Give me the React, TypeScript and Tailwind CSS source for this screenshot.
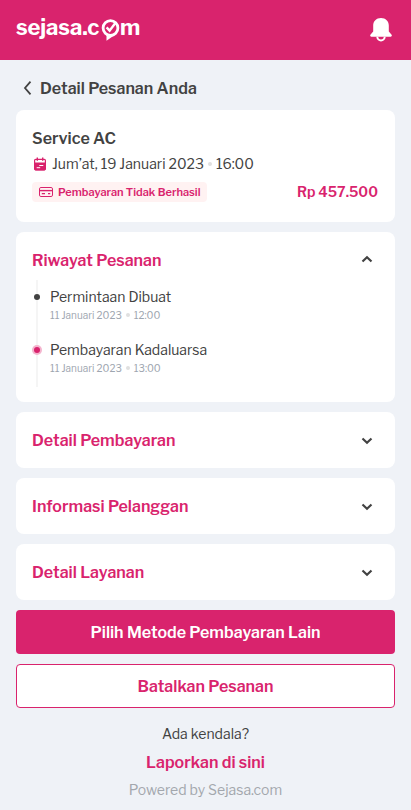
import { useState } from "react";
import type { ReactNode } from "react";

type HistoryItem = {
  label: string;
  date: string;
  time: string;
  active?: boolean;
};

const history: HistoryItem[] = [
  { label: "Permintaan Dibuat", date: "11 Januari 2023", time: "12:00" },
  { label: "Pembayaran Kadaluarsa", date: "11 Januari 2023", time: "13:00", active: true },
];

function Logo() {
  return (
    <div className="-mt-0.5 flex h-6 items-center text-[22px] leading-6 font-bold text-white">
      <span className="w-[85px] tracking-[-0.1px]">sejasa.c</span>
      <svg width="19" height="22" viewBox="0 0 19 22" fill="none" className="mt-[5px]">
        <circle cx="9.5" cy="9" r="7.400" stroke="white" strokeWidth="2.800" />
        <path d="M5.500 15.500V21.800l7.500-5.300z" fill="white" />
        <path d="M5.600 8.400l3 3.200 5.600-7.400" stroke="white" strokeWidth="2.400" />
      </svg>
      <span>m</span>
    </div>
  );
}

function BellIcon() {
  return (
    <svg width="22" height="24" viewBox="0 0 22 24">
      <path
        d="M11 0C6.300 0 3.200 3.200 3.200 7.500v6L.6 16.500c-.8 1-.4 2.200.7 2.200h19.400c1.100 0 1.500-1.200.7-2.200l-2.600-3v-6C18.800 3.200 15.700 0 11 0z"
        fill="white"
      />
      <path d="M7.300 18.700a3.700 3.700 0 0 0 7.400 0" fill="none" stroke="white" strokeWidth="2" />
    </svg>
  );
}

function CalendarIcon() {
  return (
    <svg width="12" height="14" viewBox="0 0 12 14" fill="none" stroke="#d9236d">
      <path
        d="M1.700 2.400h8.600c.6 0 1.100.5 1.100 1.100v8.300c0 .6-.5 1.100-1.100 1.100H1.700c-.6 0-1.100-.5-1.100-1.100V3.500c0-.6.500-1.100 1.100-1.100z"
        strokeWidth="1.200"
      />
      <path d="M3.300.5v3.300M8.700.5v3.300" strokeWidth="1.400" />
      <path d="M.6 6h10.800v5.800c0 .6-.5 1.100-1.100 1.100H1.700c-.6 0-1.100-.5-1.100-1.100z" fill="#d9236d" />
      <path d="M5.300 8.500h4M2.700 10.700h3.500" stroke="white" />
    </svg>
  );
}

function CardIcon() {
  return (
    <svg width="14" height="10" viewBox="0 0 14 10" fill="none" stroke="#d9236d">
      <rect x=".5" y=".5" width="13" height="9" rx="1.400" />
      <path d="M.6 3.600h12.800" strokeWidth="1.400" />
      <path d="M2.800 6.700h3.200M9 6.700h2.200" strokeWidth="1.200" />
    </svg>
  );
}

function Chevron({ open = false }: { open?: boolean }) {
  return (
    <svg
      width="12"
      height="8"
      viewBox="0 0 12 8"
      fill="none"
      className={open ? "mb-[3px] rotate-180" : ""}
    >
      <path d="M1.500 1.500L6 5.700l4.500-4.200" stroke="#424242" strokeWidth="2.200" />
    </svg>
  );
}

function Dot({ className }: { className: string }) {
  return <span className={`size-1 shrink-0 rounded-full bg-[#e0e0e0] ${className}`} />;
}

type SectionProps = {
  title: string;
  defaultOpen?: boolean;
  children?: ReactNode;
};

function Section({ title, defaultOpen = false, children }: SectionProps) {
  const [open, setOpen] = useState(defaultOpen);

  return (
    <section className="rounded-lg bg-white">
      <button
        type="button"
        onClick={() => setOpen(!open)}
        className="flex h-14 w-full items-center justify-between pt-px pr-[22px] pl-4"
      >
        <span className="pt-px text-base font-semibold text-[#d9236d]">{title}</span>
        <Chevron open={open} />
      </button>
      {open && children}
    </section>
  );
}

export default function App() {
  return (
    <div className="h-[810px] overflow-hidden bg-[#eff2f7] font-['Libre_Franklin','Inter',sans-serif] text-[#424242]">
      <header className="flex h-[60px] items-center justify-between bg-[#d9236d] pr-[19px] pb-1 pl-4">
        <Logo />
        <div className="mt-1">
          <BellIcon />
        </div>
      </header>

      <main className="px-4">
        <div className="flex h-[50px] items-center pt-1.5 pl-[7px]">
          <svg width="9" height="14" viewBox="0 0 9 14" fill="none">
            <path d="M7.500 .7L2 7l5.500 6.300" stroke="#424242" strokeWidth="1.800" />
          </svg>
          <h1 className="ml-2 pt-0.5 text-base font-semibold">Detail Pesanan Anda</h1>
        </div>

        <div className="flex flex-col gap-2.5">
          <section className="h-28 rounded-lg bg-white px-4 pt-[17px]">
            <h2 className="text-base font-semibold">Service AC</h2>
            <div className="mt-px flex h-6 items-center pl-0.5 text-sm">
              <CalendarIcon />
              <span className="ml-1.5">Jum’at, 19 Januari 2023</span>
              <Dot className="mx-1" />
              <span>16:00</span>
            </div>
            <div className="mt-1.5 flex items-center justify-between">
              <div className="flex h-5 items-center rounded bg-[#fff2f2] pr-1.5 pl-[7px] text-[11px] font-semibold text-[#d9236d]">
                <CardIcon />
                <span className="ml-[5px]">Pembayaran Tidak Berhasil</span>
              </div>
              <span className="pr-px text-sm font-semibold text-[#d9236d]">Rp 457.500</span>
            </div>
          </section>

          <Section title="Riwayat Pesanan" defaultOpen>
            <div className="relative h-[114px] px-4">
              <div className="absolute top-[-8px] left-5 h-[107px] w-0.5 bg-[#f5f5f5]" />
              <ul>
                {history.map((item) => (
                  <li key={item.label} className="relative flex h-[53px]">
                    <span
                      className={`mt-1 grid size-2.5 place-items-center rounded-full ${
                        item.active ? "bg-[#f4b5ce]" : ""
                      }`}
                    >
                      <span
                        className={`size-1.5 rounded-full ${
                          item.active ? "bg-[#d9236d]" : "bg-[#424242]"
                        }`}
                      />
                    </span>
                    <div className="ml-2">
                      <p className="text-sm leading-[18px]">{item.label}</p>
                      <p className="mt-px flex items-center text-[10px] leading-4 text-[#9ea6b0]">
                        <span>{item.date}</span>
                        <Dot className="mx-1" />
                        <span>{item.time}</span>
                      </p>
                    </div>
                  </li>
                ))}
              </ul>
            </div>
          </Section>

          <Section title="Detail Pembayaran" />
          <Section title="Informasi Pelanggan" />
          <Section title="Detail Layanan" />

          <button type="button" className="h-11 rounded bg-[#d9236d] pt-0.5 font-semibold text-white">
            Pilih Metode Pembayaran Lain
          </button>
          <button
            type="button"
            className="h-11 rounded border border-[#d9236d] bg-white pt-0.5 font-semibold text-[#d9236d]"
          >
            Batalkan Pesanan
          </button>
        </div>

        <footer className="mt-3.5 flex flex-col items-center text-sm leading-6">
          <p>Ada kendala?</p>
          <a href="#" className="mt-[5px] text-base leading-6 font-semibold text-[#d9236d]">
            Laporkan di sini
          </a>
          <p className="mt-[3px] text-[#a3a7ad]">Powered by Sejasa.com</p>
        </footer>
      </main>
    </div>
  );
}
